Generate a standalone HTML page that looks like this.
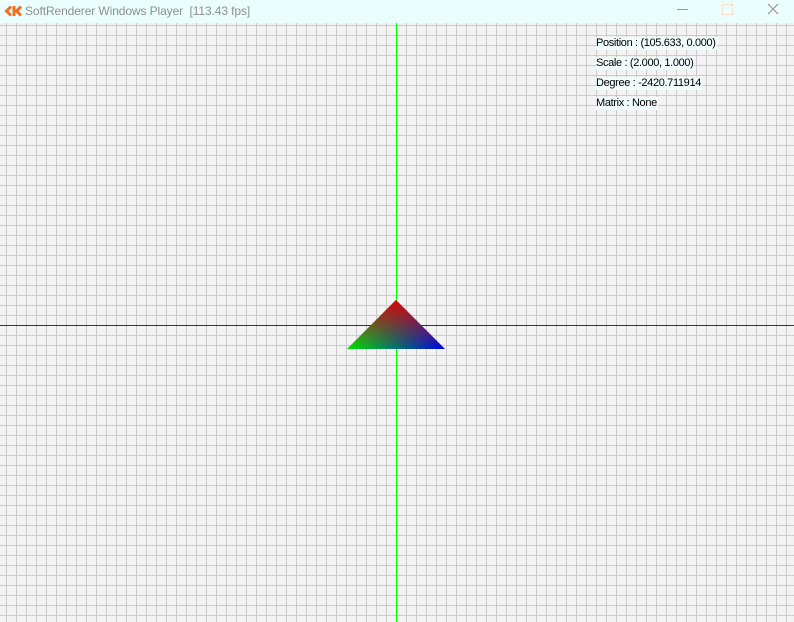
<!DOCTYPE html>
<html><head><meta charset="utf-8"><style>
html,body{margin:0;padding:0;width:794px;height:622px;overflow:hidden;font-family:"Liberation Sans",sans-serif}
#title{position:absolute;left:0;top:0;width:794px;height:23px;background:#eafefe}
#title .t{position:absolute;left:25px;top:4px;font-size:12px;color:#8f8f8f;letter-spacing:-0.1px}
#canvas{position:absolute;left:0;top:23px;width:794px;height:599px;background-color:#f3f3f3;
background-image:linear-gradient(to right,#cbcbcb 1px,transparent 1px),linear-gradient(to bottom,#cbcbcb 1px,transparent 1px);
background-size:10px 10px;background-position:6px 2px}
.info{position:absolute;left:596px;font-size:11px;color:#000;background:#f0fcfc;line-height:13px;letter-spacing:-0.35px;padding:0 1px 0 0}
</style></head><body>
<div id="title">
<svg style="position:absolute;left:4px;top:5px" width="18" height="12" viewBox="0 0 18 12">
<path d="M7 1.5 L2.5 6 L7 10.5" stroke="#f07020" stroke-width="3" fill="none"/>
<path d="M10 1 V11 M17 1.5 L12.5 6 L17 10.5" stroke="#f07020" stroke-width="3" fill="none"/>
</svg>
<div class="t">SoftRenderer Windows Player&nbsp;&nbsp;[113.43 fps]</div>
<div style="position:absolute;left:677px;top:9px;width:11px;height:1px;background:#999"></div>
<div style="position:absolute;left:722px;top:4px;width:9px;height:9px;border:1px dashed #f4d8c8"></div>
<svg style="position:absolute;left:767px;top:3px" width="12" height="12"><path d="M1 1 L11 11 M11 1 L1 11" stroke="#a09090" stroke-width="1.2"/></svg>
</div>
<div id="canvas"></div>
<div style="position:absolute;left:0;top:325px;width:794px;height:1px;background:#b00000"></div>
<div style="position:absolute;left:396px;top:23px;width:1px;height:599px;background:#00ff00"></div>
<svg style="position:absolute;left:0;top:0" width="794" height="622">
<defs>
<linearGradient id="gr" x1="396" y1="300" x2="396" y2="349" gradientUnits="userSpaceOnUse"><stop offset="0" stop-color="#ff0000"/><stop offset="1" stop-color="#ff0000" stop-opacity="0"/></linearGradient>
<linearGradient id="gb" x1="347" y1="349" x2="445" y2="349" gradientUnits="userSpaceOnUse"><stop offset="0" stop-color="#00ff00"/><stop offset="1" stop-color="#0000ff"/></linearGradient>
</defs>
<polygon points="347,349 396,300 445,349" fill="url(#gb)"/>
<polygon points="347,349 396,300 445,349" fill="url(#gr)" opacity="0.95"/>
<polygon points="347,349 396,300 445,349" fill="#000" opacity="0.1"/>
</svg>
<div class="info" style="top:37px">Position : (105.633, 0.000)</div>
<div class="info" style="top:57px">Scale : (2.000, 1.000)</div>
<div class="info" style="top:77px">Degree : -2420.711914</div>
<div class="info" style="top:97px">Matrix : None</div>
</body></html>
